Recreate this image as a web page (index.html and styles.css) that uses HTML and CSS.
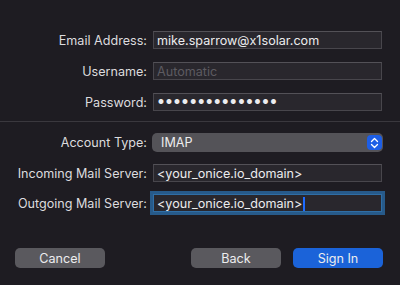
FILE: index.html
```html
<!DOCTYPE html>
<html lang="en">
<head>
    <meta charset="UTF-8">
    <title>Account Setup</title>
    <link rel="stylesheet" href="styles.css">
</head>
<body>
    <div class="sheet">
        <div class="form top">
            <label class="label">Email Address:</label>
            <div class="field">mike.sparrow@x1solar.com</div>
            <label class="label">Username:</label>
            <div class="field placeholder">Automatic</div>
            <label class="label">Password:</label>
            <div class="field dots">&#9679;&#9679;&#9679;&#9679;&#9679;&#9679;&#9679;&#9679;&#9679;&#9679;&#9679;&#9679;&#9679;&#9679;&#9679;</div>
        </div>

        <hr class="divider">

        <div class="form bottom">
            <label class="label">Account Type:</label>
            <div class="popup">
                <span>IMAP</span>
                <span class="stepper">
                    <svg width="9" height="12" viewBox="0 0 9 12">
                        <path d="M1.5 4.5 L4.5 1.5 L7.5 4.5 M1.5 7.5 L4.5 10.5 L7.5 7.5" fill="none" stroke="#fff" stroke-width="1.3" stroke-linecap="round" stroke-linejoin="round"/>
                    </svg>
                </span>
            </div>
            <label class="label">Incoming Mail Server:</label>
            <div class="field">&lt;your_onice.io_domain&gt;</div>
            <label class="label">Outgoing Mail Server:</label>
            <div class="field focused">&lt;your_onice.io_domain&gt;<span class="caret"></span></div>
        </div>

        <div class="buttons">
            <button class="btn">Cancel</button>
            <div class="right">
                <button class="btn">Back</button>
                <button class="btn primary">Sign In</button>
            </div>
        </div>
    </div>
</body>
</html>
```

FILE: styles.css
```css
:root {
    --bg: #1e1c22;
    --field-bg: #29272d;
    --field-border: #48464c;
    --label: #dcdbde;
    --text: #ececee;
    --gray-btn: #5a595e;
    --blue: #1b63d9;
}

body {
    margin: 0;
    background-color: var(--bg);
    font-family: 'Inter', 'Liberation Sans', sans-serif;
    font-size: 12.6px;
    color: var(--text);
}

.sheet {
    width: 400px;
    height: 285px;
    padding-top: 31px;
    box-sizing: border-box;
}

.form {
    display: grid;
    grid-template-columns: 147px 229px;
    column-gap: 6px;
    align-items: center;
}

.top {
    row-gap: 13px;
}

.bottom {
    row-gap: 12px;
}

.label {
    text-align: right;
    color: var(--label);
    white-space: nowrap;
}

.field {
    height: 18px;
    line-height: 17px;
    box-sizing: border-box;
    background-color: var(--field-bg);
    border: 1px solid var(--field-border);
    border-top-color: #535157;
    padding: 0 3px;
    white-space: nowrap;
    position: relative;
}

.placeholder {
    color: #5d5b61;
}

.dots {
    font-size: 6.5px;
    letter-spacing: 2.1px;
    line-height: 16px;
    padding-left: 4px;
}

.divider {
    margin: 10px 0 11px;
    border: none;
    border-top: 1px solid #3a383e;
}

.popup {
    height: 19px;
    width: 231px;
    margin-left: -1px;
    box-sizing: border-box;
    background-color: #545358;
    border-radius: 5px;
    display: flex;
    align-items: center;
    justify-content: space-between;
    padding: 0 1px 0 9px;
    color: #ececee;
}

.stepper {
    width: 15px;
    height: 15px;
    background-color: #1d5ee6;
    border-radius: 4px;
    display: flex;
    align-items: center;
    justify-content: center;
}

.focused {
    outline: 3px solid #275a8a;
    outline-offset: 0;
    border-color: #2f6ea6;
}

.caret {
    display: inline-block;
    width: 2px;
    height: 14px;
    background-color: #1e6bff;
    vertical-align: -3px;
    margin-left: 1px;
}

.buttons {
    display: flex;
    justify-content: space-between;
    padding: 0 17px 0 15px;
    margin-top: 36px;
}

.right {
    display: flex;
    gap: 12px;
}

.btn {
    width: 90px;
    height: 20px;
    border: none;
    border-radius: 5px;
    background-color: var(--gray-btn);
    color: #ececee;
    font-family: inherit;
    font-size: 12.6px;
    padding: 0;
}

.primary {
    background-color: var(--blue);
}
```
